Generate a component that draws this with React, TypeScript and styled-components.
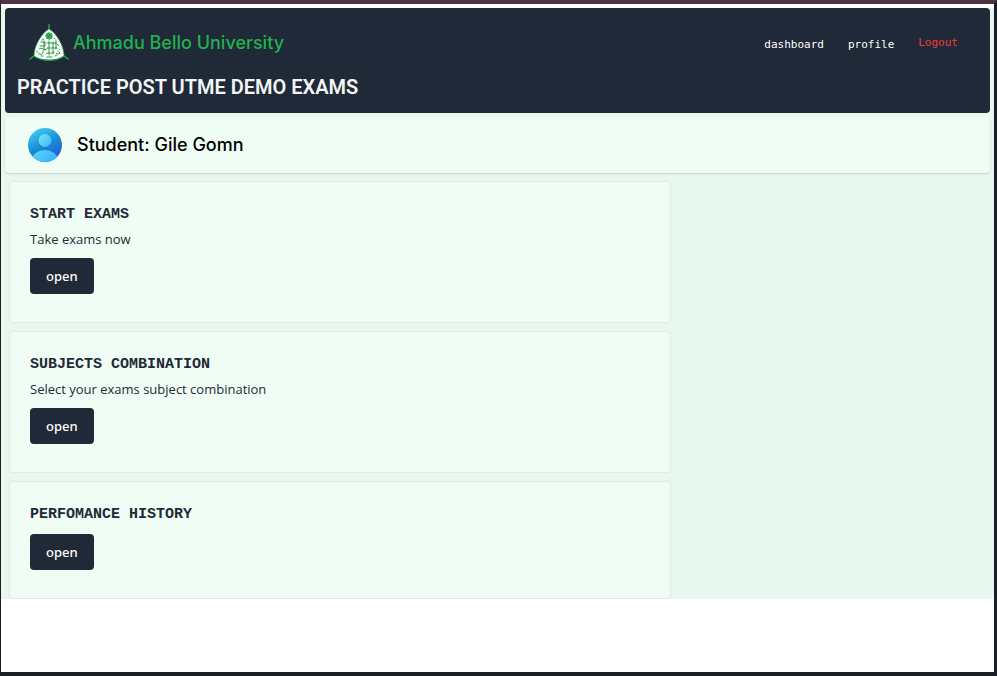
import React from "react";
import styled, { createGlobalStyle } from "styled-components";

const GlobalStyle = createGlobalStyle`
  *, *::before, *::after { box-sizing: border-box; }
  body { margin: 0; background: #fff; font-family: "Open Sans", "Noto Sans", sans-serif; }
  h1, h2, p { margin: 0; }
`;

const Frame = styled.div`
  min-height: 100vh;
  border: solid #1a2026;
  border-width: 4px 3px 4px 1px;
  border-top-color: #4a3445;
  padding-top: 4px;
  background: #fff;
`;

const Page = styled.main`
  display: flex;
  flex-direction: column;
  background: #e8f8ee;
`;

const Header = styled.header`
  margin: 0 4px;
  padding: 16px 12px 12px;
  border-radius: 4px;
  background: #1f2937;
`;

const TopRow = styled.div`
  display: flex;
  align-items: center;
  justify-content: space-between;
  height: 38px;
  padding: 0 20px 0 12px;
`;

const Brand = styled.a`
  display: flex;
  align-items: center;
  gap: 4px;
  color: #22b14f;
  font: 500 18px/28px Inter, sans-serif;
  text-decoration: none;
  white-space: nowrap;
`;

const Nav = styled.nav`
  display: flex;
  align-items: center;
  gap: 24px;
`;

const NavLink = styled.a`
  padding-top: 3px;
  color: #fff;
  font: 11px/16px "DejaVu Sans Mono", monospace;
  text-decoration: none;
`;

const Logout = styled.button`
  padding: 0;
  border: 0;
  background: none;
  color: #ef3b3b;
  font: 11px/16px "DejaVu Sans Mono", monospace;
  cursor: pointer;
`;

const Title = styled.h1`
  margin-top: 11px;
  color: #f3f4f6;
  font: 600 20px/28px Roboto, sans-serif;
`;

const StudentBar = styled.section`
  display: flex;
  align-items: center;
  gap: 14px;
  height: 56px;
  margin: 4px 4px 0;
  padding: 0 22px;
  border-radius: 4px;
  background: #f0fdf4;
  box-shadow: 0 1px 2px rgba(0, 0, 0, 0.16);
`;

const StudentName = styled.h2`
  color: #000;
  font: 500 18px/28px Inter, sans-serif;
`;

const CardList = styled.div`
  display: flex;
  flex-direction: column;
  gap: 8px;
  width: 66.6667%;
  margin: 8px 8px 0;
`;

const Card = styled.section`
  padding: 20px 20px 28px;
  border: 1px solid #e5e7eb;
  border-radius: 4px;
  background: #f0fdf4;
`;

const CardTitle = styled.h2`
  padding-top: 1px;
  color: #1f2937;
  font: 700 15px/23px "Liberation Mono", monospace;
`;

const CardText = styled.p`
  padding: 3px 0 1px;
  color: #1f2937;
  font: 400 13px/20px "Open Sans", sans-serif;
`;

const OpenButton = styled.button`
  display: block;
  height: 36px;
  margin-top: 8px;
  padding: 0 16px;
  border: 0;
  border-radius: 4px;
  background: #1f2937;
  color: #fff;
  font: 500 13px/20px "Noto Sans", sans-serif;
  cursor: pointer;
`;

const Crest = () => (
  <svg width="40" height="38" viewBox="0 0 40 38" aria-hidden="true">
    <path d="M20 1V7M5 32L1 35M35 32L39 35" stroke="#159b3b" strokeWidth="1.8" strokeLinecap="round" />
    <path d="M20 5C27 9 35 21 35 32C27 38 13 38 5 32C5 21 13 9 20 5Z" fill="#fff" stroke="#159b3b" strokeWidth=".7" />
    <path d="M6 33C13 37 27 37 34 33" stroke="#159b3b" strokeWidth="1.2" fill="none" />
    <circle cx="20" cy="12" r="3.5" fill="#45ad62" />
    <path d="M17 9L23 15M23 9L17 15M20 8V16M16 12H24" stroke="#159b3b" strokeWidth=".5" />
    <g fill="none" stroke="#158936" strokeWidth=".9" strokeLinecap="round">
      <path d="M12 18H16V22H11M15 17V26M20 17V31M24 18V30M18 19H27M18 24H28M27 16V25" />
      <path d="M10 25C13 22 15 28 18 25M9 29C12 32 15 30 14 27M17 30C19 27 22 31 25 28M27 29C31 32 32 28 29 27" />
      <path d="M28 20L30 22M30 25L31 26M12 32H14M18 33H23M26 32L28 31M15 15L13 16M25 14L26 15M8 27V28" />
    </g>
  </svg>
);

const Avatar = () => (
  <svg width="36" height="36" viewBox="0 0 36 36" aria-hidden="true">
    <defs>
      <linearGradient id="disc" x1=".3" y1="0" x2=".8" y2="1">
        <stop stopColor="#42c9ef" />
        <stop offset=".45" stopColor="#198fd6" />
        <stop offset="1" stopColor="#2153cf" />
      </linearGradient>
      <linearGradient id="person" x1="0" y1="0" x2="1" y2="1">
        <stop stopColor="#7be9fb" />
        <stop offset="1" stopColor="#38b5f3" />
      </linearGradient>
      <linearGradient id="body" x1="0" y1="0" x2="1" y2="1">
        <stop stopColor="#5bdcf9" />
        <stop offset="1" stopColor="#279eff" />
      </linearGradient>
      <clipPath id="round"><circle cx="18" cy="18" r="17" /></clipPath>
    </defs>
    <circle cx="18" cy="18" r="17" fill="url(#disc)" />
    <circle cx="18" cy="14.5" r="7" fill="#1679bd" opacity=".35" />
    <circle cx="18" cy="13.5" r="6.5" fill="url(#person)" />
    <ellipse cx="18" cy="33" rx="13" ry="10" fill="url(#body)" clipPath="url(#round)" />
  </svg>
);

const cards = [
  { title: "START EXAMS", text: "Take exams now" },
  { title: "SUBJECTS COMBINATION", text: "Select your exams subject combination" },
  { title: "PERFOMANCE HISTORY" },
];

export default function App() {
  return (
    <Frame>
      <GlobalStyle />
      <Page>
        <Header>
          <TopRow>
            <Brand href="#"><Crest />Ahmadu Bello University</Brand>
            <Nav>
              <NavLink href="#dashboard">dashboard</NavLink>
              <NavLink href="#profile">profile</NavLink>
              <Logout type="button">Logout</Logout>
            </Nav>
          </TopRow>
          <Title>PRACTICE POST UTME DEMO EXAMS</Title>
        </Header>
        <StudentBar>
          <Avatar />
          <StudentName>Student: Gile Gomn</StudentName>
        </StudentBar>
        <CardList>
          {cards.map(({ title, text }) => (
            <Card key={title}>
              <CardTitle>{title}</CardTitle>
              {text && <CardText>{text}</CardText>}
              <OpenButton type="button">open</OpenButton>
            </Card>
          ))}
        </CardList>
      </Page>
    </Frame>
  );
}
